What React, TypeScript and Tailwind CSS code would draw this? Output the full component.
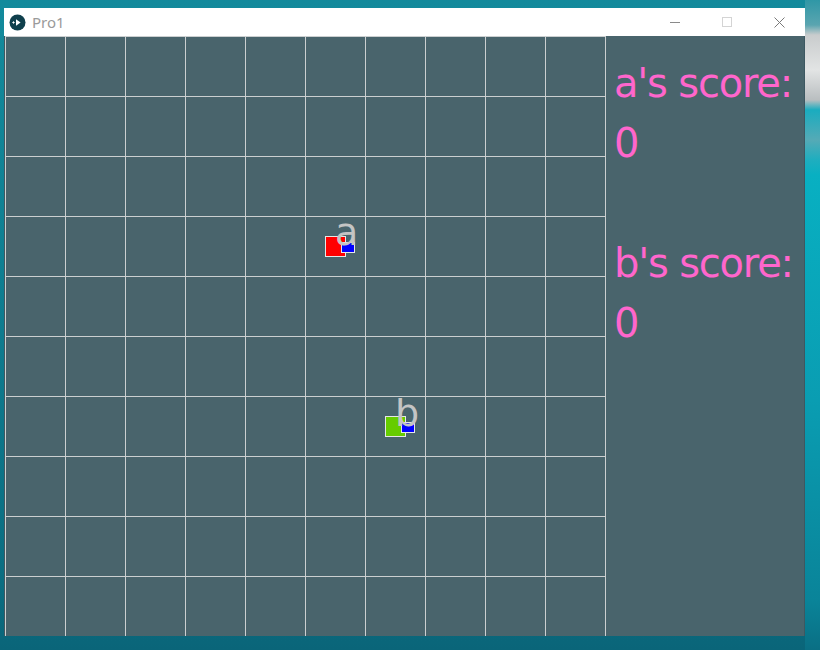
import React from 'react';

type Player = {
  label: string,
  color: string,
  x: number,
  y: number
}

const players: Player[] = [
  { label: 'a', color: '#ff0000', x: 320, y: 200 },
  { label: 'b', color: '#66cc00', x: 380, y: 380 },
];

const scores = [
  { name: "a's score:", value: 0 },
  { name: "b's score:", value: 0 },
];

function ProcessingIcon() {
  return (
    <svg width="17" height="17" viewBox="0 0 17 17">
      <circle cx="8.5" cy="8.5" r="8" fill="#0f3f4c" />
      <path d="M7 5.2 L11.6 8.5 L7 11.8 Z" fill="#ffffff" />
      <path d="M3.3 8.5 H5.7 M4.5 7.3 V9.7" stroke="#ffffff" strokeWidth="0.9" />
    </svg>
  );
}

function TitleBar() {
  return (
    <div className="h-[28px] bg-white flex items-center pl-[5px]">
      <ProcessingIcon />
      <span className="ml-[6px] text-[15px] text-[#9a9a9a] leading-none font-['Noto_Sans',sans-serif]">Pro1</span>
      <div className="ml-auto flex h-full">
        <div className="w-[52px] h-full flex items-center justify-center">
          <div className="w-[10px] h-px bg-[#8a8a8a]" />
        </div>
        <div className="w-[52px] h-full flex items-center justify-center">
          <div className="w-[10px] h-[10px] border border-[#d4d4d4]" />
        </div>
        <div className="w-[52px] h-full flex items-center justify-center">
          <svg width="11" height="11" viewBox="0 0 11 11">
            <path d="M0.5 0.5 L10.5 10.5 M10.5 0.5 L0.5 10.5" stroke="#7a7a7a" strokeWidth="1" />
          </svg>
        </div>
      </div>
    </div>
  );
}

function Board() {
  const cells = Array.from({ length: 100 });
  return (
    <div className="relative w-[601px] h-[600px] border-r border-[#cbcfd0]">
      <div className="grid grid-cols-[repeat(10,60px)] grid-rows-[repeat(10,60px)]">
        {cells.map((_, i) => (
          <div key={i} className="border-l border-t border-[#cbcfd0]" />
        ))}
      </div>
      {players.map((p) => (
        <React.Fragment key={p.label}>
          <div
            className="absolute w-[21px] h-[21px] border border-[#e6e6e6]"
            style={{ left: p.x, top: p.y, backgroundColor: p.color }}
          />
          <div
            className="absolute w-[14px] h-[11px] bg-[#0000ff] border border-[#e6e6e6]"
            style={{ left: p.x + 16, top: p.y + 6 }}
          />
          <span
            className="absolute text-[38px] leading-none text-[#c4c4c4] font-['DejaVu_Sans',sans-serif]"
            style={{ left: p.x + 10, top: p.y - 23 - (p.label === 'b' ? -1 : 0) }}
          >
            {p.label}
          </span>
        </React.Fragment>
      ))}
    </div>
  );
}

function ScorePanel() {
  return (
    <div className="w-[198px] h-[600px] pt-[17px] pl-[8px] text-[40px] leading-[60px] tracking-[-1.2px] text-[#ff66cc] font-['DejaVu_Sans',sans-serif] whitespace-nowrap overflow-hidden">
      {scores.map((s, i) => (
        <div key={s.name} className={i > 0 ? 'mt-[60px]' : ''}>
          <div>{s.name}</div>
          <div>{s.value}</div>
        </div>
      ))}
    </div>
  );
}

export default function App() {
  return (
    <div className="w-[820px] h-[650px] overflow-hidden flex bg-[linear-gradient(to_bottom,#138a9c,#0f7f92_40%,#0b6d81_90%,#0a6579)]">
      <div className="w-[4px]" />
      <div className="w-[801px] mt-[8px] h-[628px] flex flex-col">
        <TitleBar />
        <div className="flex bg-[#49646c] border-x border-[#3d5861]">
          <Board />
          <ScorePanel />
        </div>
      </div>
      <div className="flex-1 bg-[linear-gradient(to_bottom,#2f97a6_0px,#5aa5b0_25px,#c9cccd_35px,#e2e4e4_70px,#b9bec0_100px,#1aacbf_110px,#55aab6_140px,#1eaebf_160px,#08b0c2_175px,#0a9db2_400px,#0a8499_600px,#0a6f84_650px)]" />
    </div>
  );
}
